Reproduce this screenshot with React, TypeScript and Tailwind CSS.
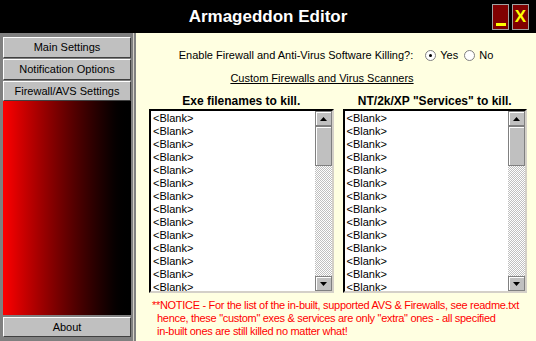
import React from 'react';

const items = Array.from({ length: 14 }, () => '<Blank>');

function SideButton({ label, h = 'h-[21px]' }: { label: string; h?: string }) {
  return (
    <div
      className={`${h} shrink-0 flex items-center justify-center bg-[#c0c0c0] border-t border-l border-white border-r border-b border-r-[#404040] border-b-[#404040] text-[11px] text-black`}
    >
      {label}
    </div>
  );
}

function ScrollBtn({ dir }: { dir: 'up' | 'down' }) {
  return (
    <div className="h-[15px] shrink-0 flex items-center justify-center bg-[#c0c0c0] border border-[#808080] shadow-[inset_1px_1px_0_#ffffff]">
      <svg width="7" height="4" viewBox="0 0 7 4">
        {dir === 'up' ? <path d="M3.5 0L7 4H0z" fill="#000" /> : <path d="M0 0h7L3.5 4z" fill="#000" />}
      </svg>
    </div>
  );
}

function ListBox() {
  return (
    <div className="flex h-[184px] bg-white border-2 border-t-black border-l-black border-r-[#d4d0c8] border-b-[#d4d0c8]">
      <div className="flex-1 overflow-hidden pt-[1px] pl-[2px]">
        {items.map((t, i) => (
          <div key={i} className="h-[13px] leading-[13px] text-[11px] text-black">
            {t}
          </div>
        ))}
      </div>
      <div className="w-[17px] flex flex-col">
        <ScrollBtn dir="up" />
        <div className="h-[40px] shrink-0 bg-[#c0c0c0] border border-[#808080] shadow-[inset_1px_1px_0_#ffffff]" />
        <div className="flex-1 bg-[repeating-conic-gradient(#c0c0c0_0%_25%,#ffffff_0%_50%)] bg-[length:2px_2px]" />
        <ScrollBtn dir="down" />
      </div>
    </div>
  );
}

export default function App() {
  return (
    <div className="w-[536px] h-[341px] flex flex-col overflow-hidden font-['Liberation_Sans',Arial,sans-serif]">
      {/* Title bar */}
      <div className="h-[33px] shrink-0 bg-black grid grid-cols-[1fr_auto_1fr] items-center">
        <div />
        <div className="text-white font-bold text-[17px]">Armageddon Editor</div>
        <div className="flex justify-end gap-[3px] pr-[7px]">
          <div className="w-[17px] h-[26px] bg-[#800000] border border-[#a0a0a0] flex items-end justify-center pb-[3px]">
            <div className="w-[10px] h-[3px] bg-[#ffff00]" />
          </div>
          <div className="w-[17px] h-[26px] bg-[#800000] border border-[#a0a0a0] flex items-center justify-center text-[#ffff00] font-bold text-[17px] leading-none">
            X
          </div>
        </div>
      </div>

      <div className="flex h-[308px] min-h-0">
        {/* Sidebar */}
        <div className="w-[136px] bg-[#808080] flex flex-col pl-[3px] pr-[5px] pt-[4px] pb-[4px] shadow-[inset_-2px_0_0_#808080,inset_-3px_0_0_#d4d0c8]">
          <SideButton label="Main Settings" />
          <div className="h-[1px]" />
          <SideButton label="Notification Options" />
          <div className="h-[1px]" />
          <SideButton label="Firewall/AVS Settings" h="h-[20px]" />
          <div className="flex-1 bg-gradient-to-r from-[#ff0000] to-black" />
          <div className="h-[2px]" />
          <SideButton label="About" h="h-[20px]" />
        </div>

        {/* Main */}
        <div className="flex-1 bg-[#ffffe1] flex flex-col pt-[15px] text-[11px] text-black">
          <div className="h-[14px] flex items-center justify-center gap-[6px]">
            <span>Enable Firewall and Anti-Virus Software Killing?:</span>
            <label className="flex items-center gap-[4px] ml-[6px]">
              <span className="w-[11px] h-[11px] rounded-full bg-white border border-[#808080] flex items-center justify-center">
                <span className="w-[3px] h-[3px] rounded-full bg-black" />
              </span>
              Yes
            </label>
            <label className="flex items-center gap-[4px]">
              <span className="w-[11px] h-[11px] rounded-full bg-white border border-[#808080]" />
              No
            </label>
          </div>
          <div className="mt-[8px] h-[14px] flex justify-center pr-[28px]">
            <span className="underline">Custom Firewalls and Virus Scanners</span>
          </div>
          <div className="mt-[9px] grid grid-cols-2 gap-[9px] pl-[13px] pr-[9px]">
            <div className="flex flex-col">
              <div className="h-[16px] text-center font-bold text-[12px] leading-[16px]">Exe filenames to kill.</div>
              <ListBox />
            </div>
            <div className="flex flex-col">
              <div className="h-[16px] text-center font-bold text-[12px] leading-[16px]">NT/2k/XP "Services" to kill.</div>
              <ListBox />
            </div>
          </div>
          <div className="mt-[6px] pl-[21px] text-[#ff0000] text-[11px] leading-[13px] tracking-[-0.3px] whitespace-nowrap">
            <div className="-ml-[5px]">**NOTICE - For the list of the in-built, supported AVS &amp; Firewalls, see readme.txt</div>
            <div>hence, these "custom" exes &amp; services are only "extra" ones - all specified</div>
            <div>in-built ones are still killed no matter what!</div>
          </div>
        </div>
      </div>
    </div>
  );
}
